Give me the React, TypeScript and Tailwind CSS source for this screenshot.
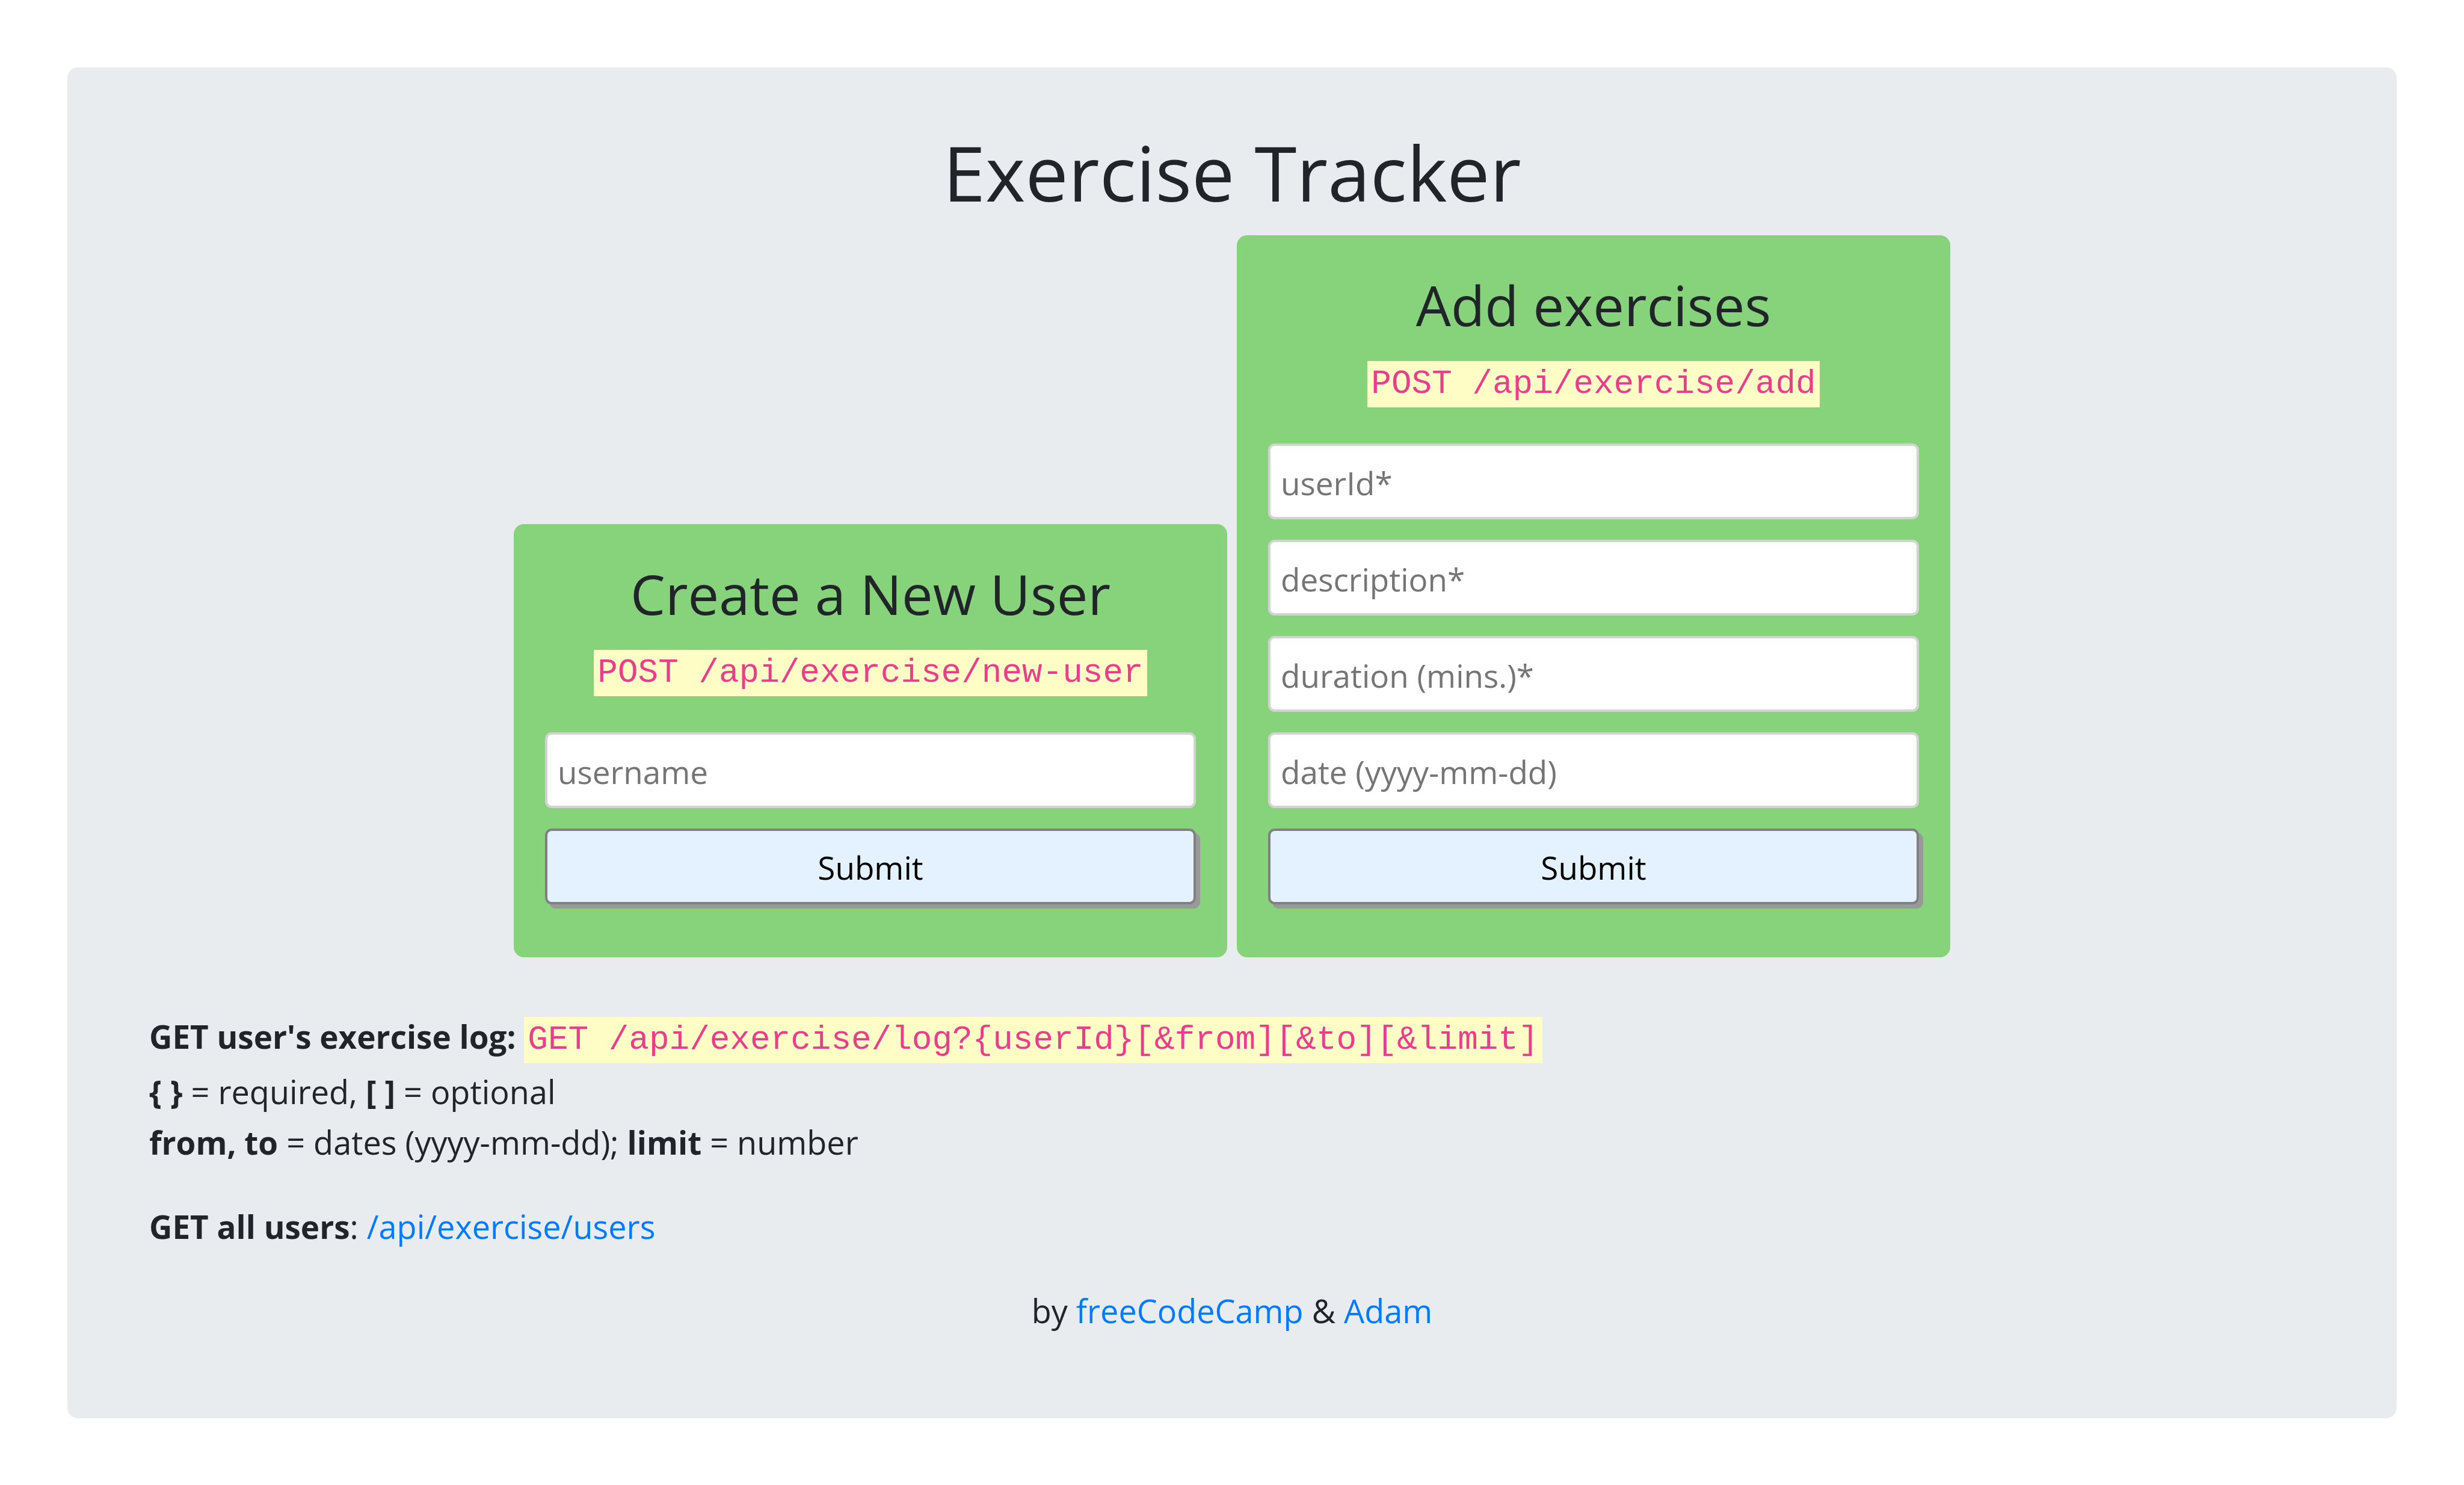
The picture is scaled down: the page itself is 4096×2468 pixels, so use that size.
import type { ReactNode } from "react";

function Code({ children }: { children: ReactNode }) {
  return (
    <code className="inline-block bg-[#fffdc6] px-[6px] py-[7px] align-baseline font-['Liberation_Mono',monospace] text-[56px] leading-[63px] text-[#e83e8c]">
      {children}
    </code>
  );
}

function Strong({ children }: { children: ReactNode }) {
  return <strong className="text-[53px] leading-none">{children}</strong>;
}

function Field({ name, placeholder }: { name: string; placeholder: string }) {
  return (
    <input
      type="text"
      name={name}
      aria-label={placeholder}
      placeholder={placeholder}
      className="h-[126px] w-full rounded-[11px] border-4 border-[#d3d3d3] bg-white px-[17px] pt-1 text-[53px] text-black placeholder:text-[#757575]"
    />
  );
}

type FormCardProps = {
  title: string;
  endpoint: string;
  fields: { name: string; placeholder: string }[];
};

function FormCard({ title, endpoint, fields }: FormCardProps) {
  return (
    <form
      onSubmit={(event) => event.preventDefault()}
      className="flex w-full max-w-[1186px] flex-col rounded-[17px] bg-[#87d37c] px-[52px] pt-[57px] pb-[88px]"
    >
      <h3 className="text-center text-[92px] leading-[118px]">{title}</h3>
      <p className="mt-[34px] mb-[60px] flex justify-center">
        <Code>{endpoint}</Code>
      </p>
      <div className="flex flex-col gap-[34px]">
        {fields.map((field) => (
          <Field key={field.name} {...field} />
        ))}
        <button
          type="submit"
          className="h-[126px] w-full rounded-[11px] border-4 border-[#808080] bg-[#e4f1fe] pt-1 text-[53px] text-black shadow-[7px_7px_0_#999999]"
        >
          Submit
        </button>
      </div>
    </form>
  );
}

const link = "text-[#007bff] hover:underline";

export default function App() {
  return (
    <div className="min-h-screen bg-white p-[112px] font-['Open_Sans',sans-serif] text-[54px] leading-[84px] text-[#212529]">
      <main className="rounded-[17px] bg-[#e9ecef] px-[136px] pt-[92px] pb-[137px]">
        <h1 className="mb-[23px] text-center text-[127px] leading-[164px]">Exercise Tracker</h1>

        <div className="flex items-end justify-center gap-4">
          <FormCard
            title="Create a New User"
            endpoint="POST /api/exercise/new-user"
            fields={[{ name: "username", placeholder: "username" }]}
          />
          <FormCard
            title="Add exercises"
            endpoint="POST /api/exercise/add"
            fields={[
              { name: "userId", placeholder: "userId*" },
              { name: "description", placeholder: "description*" },
              { name: "duration", placeholder: "duration (mins.)*" },
              { name: "date", placeholder: "date (yyyy-mm-dd)" },
            ]}
          />
        </div>

        <p className="mt-[89px]">
          <Strong>GET user's exercise log: </Strong>
          <Code>GET /api/exercise/log?&#123;userId&#125;[&amp;from][&amp;to][&amp;limit]</Code>
        </p>
        <p className="mt-[5px]">
          <Strong>&#123; &#125;</Strong> = required, <Strong>[ ]</Strong> = optional
          <br />
          <Strong>from, to</Strong> = dates (yyyy-mm-dd); <Strong>limit</Strong> = number
        </p>
        <p className="mt-[56px]">
          <Strong>GET all users</Strong>:{" "}
          <a href="#users" className={link}>
            /api/exercise/users
          </a>
        </p>
        <footer className="mt-[56px] text-center">
          by{" "}
          <a href="#freecodecamp" className={link}>
            freeCodeCamp
          </a>{" "}
          &amp;{" "}
          <a href="#adam" className={link}>
            Adam
          </a>
        </footer>
      </main>
    </div>
  );
}
